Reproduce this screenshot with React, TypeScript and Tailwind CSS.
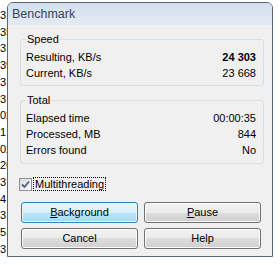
import * as React from 'react';

const behind = ['31', '35', '3', '39', '3', '3', '02', '1', '02', '26', '3', '4', '3', '5', '3'];

function Row({ label, value, bold }: { label: string; value: string; bold?: boolean }) {
  return (
    <div className="flex justify-between h-[16px] leading-[16px]">
      <span>{label}</span>
      <span className={bold ? 'font-bold' : ''}>{value}</span>
    </div>
  );
}

function Group({ title, className, children }: { title: string; className?: string; children: React.ReactNode }) {
  return (
    <fieldset className={`border border-[#d5dfe5] rounded-[3px] pl-[5px] pr-[7px] pt-[3px] pb-[4px] ${className ?? ''}`}>
      <legend className="px-[1px] leading-[13px]">{title}</legend>
      {children}
    </fieldset>
  );
}

function Button({ children, primary }: { children: React.ReactNode; primary?: boolean }) {
  return (
    <button
      className={
        primary
          ? 'h-[21px] rounded-[3px] border border-[#3c7fb1] bg-[linear-gradient(#eaf6fd,#d9f0fc_50%,#bee6fd_50%,#a7d9f5)] shadow-[inset_0_0_0_1px_#e8f6fd] text-black'
          : 'h-[21px] rounded-[3px] border border-[#707070] bg-[linear-gradient(#f2f2f2,#ebebeb_50%,#dddddd_50%,#cfcfcf)] shadow-[inset_0_0_0_1px_#fcfcfc] text-black'
      }
    >
      {children}
    </button>
  );
}

export default function App() {
  return (
    <div className="w-[280px] h-[265px] bg-white flex overflow-hidden font-['Liberation_Sans',Arial,sans-serif] text-[11px] text-black">
      {/* window behind */}
      <div className="w-[7px] shrink-0 overflow-hidden pt-[7px] leading-[16.7px] whitespace-nowrap">
        {behind.map((t, i) => (
          <div key={i}>{t}</div>
        ))}
      </div>

      <div className="mt-[2px] w-[266px] h-[255px] shrink-0 border border-[#5b6676] rounded-t-[6px] flex flex-col bg-[#f0f0f0]">
        <div className="h-[22px] shrink-0 rounded-t-[5px] bg-gradient-to-b from-[#d3dfee] to-[#e3ebf5] pl-[4px] flex items-center text-[12.5px] text-[#3a4554]">
          Benchmark
        </div>

        <div className="flex-1 pl-[12px] pr-[8px] pt-[8px] flex flex-col">
          <Group title="Speed">
            <Row label="Resulting, KB/s" value="24 303" bold />
            <Row label="Current, KB/s" value="23 668" />
          </Group>

          <Group title="Total" className="mt-[8px] pb-[5px]">
            <Row label="Elapsed time" value="00:00:35" />
            <Row label="Processed, MB" value="844" />
            <Row label="Errors found" value="No" />
          </Group>

          <label className="mt-[13px] -ml-[1px] flex items-center h-[14px]">
            <span className="w-[13px] h-[13px] border border-[#8e8f8f] bg-[linear-gradient(135deg,#dcdcdc,#fbfbfb)] flex items-center justify-center">
              <svg width="9" height="9" viewBox="0 0 9 9">
                <path d="M1 4.5 L3.5 7 L8 1.5" fill="none" stroke="#4a5f97" strokeWidth="1.8" />
              </svg>
            </span>
            <span className="ml-[1px] px-[1px] border border-dotted border-black leading-[12px]">Multithreading</span>
          </label>

          <div className="mt-[11px] ml-[1px] grid grid-cols-[117px_117px] gap-x-[6px] gap-y-[5px]">
            <Button primary>
              <span className="underline">B</span>ackground
            </Button>
            <Button>
              <span className="underline">P</span>ause
            </Button>
            <Button>Cancel</Button>
            <Button>Help</Button>
          </div>
        </div>
      </div>
    </div>
  );
}
